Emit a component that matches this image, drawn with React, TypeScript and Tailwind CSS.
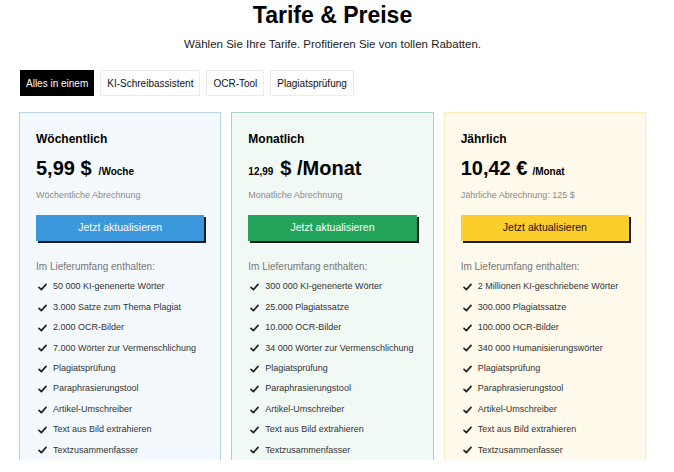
import React from "react";

type Plan = {
  name: string;
  price: React.ReactNode;
  billing: string;
  cardCls: string;
  btnCls: string;
  features: string[];
};

const Check = () => (
  <svg width="9" height="8" viewBox="0 0 9 8" className="shrink-0">
    <path d="M1 4.3 L3.4 6.6 L8 1.4" fill="none" stroke="#222" strokeWidth="1.7" strokeLinecap="round" strokeLinejoin="round" />
  </svg>
);

const common = ["Plagiatsprüfung", "Paraphrasierungstool", "Artikel-Umschreiber", "Text aus Bild extrahieren", "Textzusammenfasser"];

const plans: Plan[] = [
  {
    name: "Wöchentlich",
    price: (
      <>
        <span className="text-[20px] font-bold">5,99 $</span>
        <span className="text-[10px] font-bold ml-[7px]">/Woche</span>
      </>
    ),
    billing: "Wöchentliche Abrechnung",
    cardCls: "border-[#b9d7e8] bg-[#f3f9fd]",
    btnCls: "bg-[#3b98dc] text-white",
    features: ["50 000 KI-genenerte Wörter", "3.000 Satze zum Thema Plagiat", "2.000 OCR-Bilder", "7.000 Wörter zur Vermenschlichung", ...common],
  },
  {
    name: "Monatlich",
    price: (
      <>
        <span className="text-[10px] font-bold mr-[7px]">12,99</span>
        <span className="text-[20px] font-bold">$ /Monat</span>
      </>
    ),
    billing: "Monatliche Abrechnung",
    cardCls: "border-[#a9d5c3] bg-[#f1f9f5]",
    btnCls: "bg-[#22a55a] text-white",
    features: ["300 000 KI-genenerte Wörter", "25.000 Plagiatssatze", "10.000 OCR-Bilder", "34 000 Wörter zur Vermenschlichung", ...common],
  },
  {
    name: "Jährlich",
    price: (
      <>
        <span className="text-[20px] font-bold">10,42 €</span>
        <span className="text-[10px] font-bold ml-[5px]">/Monat</span>
      </>
    ),
    billing: "Jährliche Abrechnung: 125 $",
    cardCls: "border-[#f9ebb3] bg-[#fffaeb]",
    btnCls: "bg-[#fccd2b] text-[#111]",
    features: ["2 Millionen KI-geschriebene Wörter", "300.000 Plagiatssatze", "100.000 OCR-Bilder", "340 000 Humanisierungswörter", ...common],
  },
];

const tabs = ["Alles in einem", "KI-Schreibassistent", "OCR-Tool", "Plagiatsprüfung"];

export default function App() {
  return (
    <div className="w-[674px] h-[472px] overflow-hidden bg-white pl-[19px] pr-[28px] text-black font-['Liberation_Sans',Arial,sans-serif]">
      <h1 className="text-center text-[23px] font-bold leading-[28px] pt-px">Tarife &amp; Preise</h1>
      <p className="mt-[7px] text-center text-[11.5px] leading-[16px] text-[#222]">
        Wählen Sie Ihre Tarife. Profitieren Sie von tollen Rabatten.
      </p>
      <div className="mt-[18px] ml-px flex gap-[6px]">
        {tabs.map((t, i) => (
          <div
            key={t}
            className={
              i === 0
                ? "h-[26px] px-[6px] flex items-center bg-black text-white text-[10px]"
                : "h-[26px] px-[6px] flex items-center bg-white border border-[#ececec] text-[#111] text-[10px]"
            }
          >
            {t}
          </div>
        ))}
      </div>
      <div className="mt-[16px] h-[348px] overflow-hidden grid grid-cols-3 gap-[10px]">
        {plans.map((p) => (
          <div key={p.name} className={`border px-[16px] pt-[18px] pb-6 ${p.cardCls}`}>
            <div className="text-[12px] font-bold leading-[16px]">{p.name}</div>
            <div className="mt-[9px] h-[24px] flex items-baseline leading-[24px]">{p.price}</div>
            <div className="mt-[9px] text-[9px] leading-[12px] text-[#8a8a8a]">{p.billing}</div>
            <button
              className={`mt-[14px] w-full h-[26px] text-[10.5px] shadow-[2px_2px_0_#1c1c1c] ${p.btnCls}`}
            >
              Jetzt aktualisieren
            </button>
            <div className="mt-[19px] text-[10px] leading-[14px] text-[#777]">Im Lieferumfang enthalten:</div>
            <ul className="mt-[3px]">
              {p.features.map((f) => (
                <li key={f} className="h-[20.4px] flex items-center gap-[6px] pl-[2px] text-[9px] text-[#333]">
                  <Check />
                  <span>{f}</span>
                </li>
              ))}
            </ul>
          </div>
        ))}
      </div>
    </div>
  );
}
